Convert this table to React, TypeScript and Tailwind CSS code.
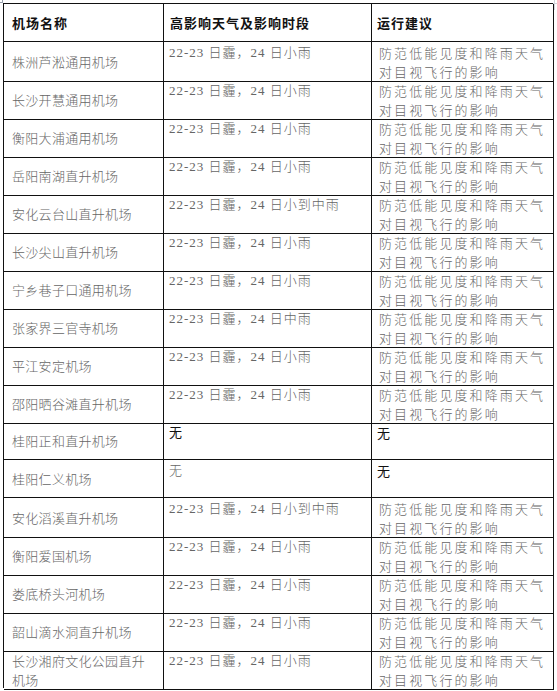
import React from 'react';

type Row = {
  name: string;
  weather: string;
  advice: string;
  weatherDark?: boolean;
};

const LIGHT_RAIN = '22-23 日霾，24 日小雨';
const MID_RAIN = '22-23 日霾，24 日小到中雨';
const ADVICE = '防范低能见度和降雨天气\n对目视飞行的影响';

const rows: Row[] = [
  { name: '株洲芦淞通用机场', weather: LIGHT_RAIN, advice: ADVICE },
  { name: '长沙开慧通用机场', weather: LIGHT_RAIN, advice: ADVICE },
  { name: '衡阳大浦通用机场', weather: LIGHT_RAIN, advice: ADVICE },
  { name: '岳阳南湖直升机场', weather: LIGHT_RAIN, advice: ADVICE },
  { name: '安化云台山直升机场', weather: MID_RAIN, advice: ADVICE },
  { name: '长沙尖山直升机场', weather: LIGHT_RAIN, advice: ADVICE },
  { name: '宁乡巷子口通用机场', weather: LIGHT_RAIN, advice: ADVICE },
  { name: '张家界三官寺机场', weather: '22-23 日霾，24 日中雨', advice: ADVICE },
  { name: '平江安定机场', weather: LIGHT_RAIN, advice: ADVICE },
  { name: '邵阳晒谷滩直升机场', weather: LIGHT_RAIN, advice: ADVICE },
  { name: '桂阳正和直升机场', weather: '无', advice: '无', weatherDark: true },
  { name: '桂阳仁义机场', weather: '无', advice: '无' },
  { name: '安化滔溪直升机场', weather: MID_RAIN, advice: ADVICE },
  { name: '衡阳爱国机场', weather: LIGHT_RAIN, advice: ADVICE },
  { name: '娄底桥头河机场', weather: LIGHT_RAIN, advice: ADVICE },
  { name: '韶山滴水洞直升机场', weather: LIGHT_RAIN, advice: ADVICE },
  { name: '长沙湘府文化公园直升机场', weather: LIGHT_RAIN, advice: ADVICE },
];

const cjk = "font-['Noto_Sans_CJK_SC',sans-serif]";
const mixed = "font-['Liberation_Serif','Noto_Sans_CJK_SC',serif]";

export default function App() {
  return (
    <div className="relative h-[691px] w-[557px] overflow-hidden bg-white">
      {/* crop marks from the document page */}
      <div className="absolute left-0 top-[2px] h-px w-[3px] bg-gray-400" />
      <div className="absolute left-[2px] top-0 h-[3px] w-px bg-gray-400" />
      <div className="absolute left-[554px] top-0 h-[10px] w-px bg-gray-300" />
      <div className="absolute left-[553px] top-[3px] h-px w-[4px] bg-gray-300" />

      <div className="ml-[3px] mt-[3px] w-[551px] border-l border-t border-[#111]">
        {/* header */}
        <div className="grid h-[38px] grid-cols-[160px_208px_182px] text-[13px] font-bold tracking-[1px] text-[#111]">
          <div className={`flex items-center border-b border-r border-[#111] pl-2 ${cjk}`}>机场名称</div>
          <div className={`flex items-center border-b border-r border-[#111] pl-[6px] ${cjk}`}>
            高影响天气及影响时段
          </div>
          <div className={`flex items-center border-b border-r border-[#111] pl-[5px] ${cjk}`}>运行建议</div>
        </div>

        {rows.map((r) => {
          const none = r.advice === '无';
          return (
            <div key={r.name} className="grid h-[38px] grid-cols-[160px_208px_182px] text-[13px] font-light">
              <div
                className={`flex items-center border-b border-r border-[#111] pl-2 pr-2 leading-[19px] tracking-[0.3px] text-[#666] ${cjk}`}
              >
                <span>{r.name}</span>
              </div>
              <div
                className={`border-b border-r border-[#111] pl-[5px] pt-px leading-[19px] tracking-[1px] ${mixed} ${
                  r.weatherDark ? 'font-normal text-[#111]' : 'text-[#666]'
                }`}
              >
                {r.weather}
              </div>
              <div
                className={`whitespace-pre-line border-b border-r border-[#111] pt-px leading-[19px] ${cjk} ${
                  none ? 'pl-[5px] font-normal text-[#111]' : 'pl-[7px] tracking-[2.1px] text-[#666]'
                }`}
              >
                {r.advice}
              </div>
            </div>
          );
        })}
      </div>
    </div>
  );
}
